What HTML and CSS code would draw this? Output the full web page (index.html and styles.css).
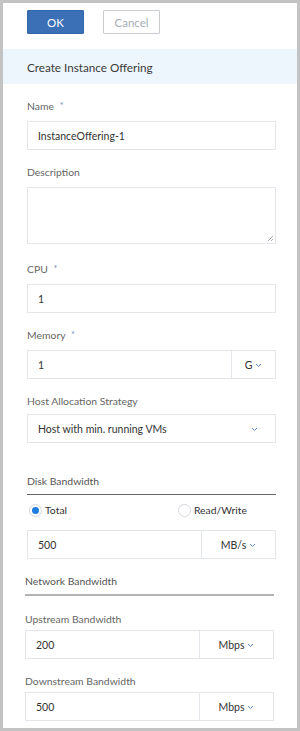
FILE: index.html
```html
<!DOCTYPE html>
<html>
<head>
<meta charset="utf-8">
<link rel="stylesheet" href="styles.css">
</head>
<body>
<div class="frame">
  <div class="actions">
    <button class="btn btn-primary">OK</button>
    <button class="btn btn-default">Cancel</button>
  </div>
  <div class="title">Create Instance Offering</div>
  <div class="form">
    <div class="field f-name">
      <div class="label">Name <span class="req">*</span></div>
      <div class="input"><span class="val">InstanceOffering-1</span></div>
    </div>
    <div class="field">
      <div class="label">Description</div>
      <div class="textarea">
        <svg class="grip" width="7" height="7" viewBox="0 0 7 7"><path d="M6 1L1 6M6 4L4 6" stroke="#999" stroke-width="0.8" fill="none"/></svg>
      </div>
    </div>
    <div class="field f-cpu">
      <div class="label">CPU <span class="req">*</span></div>
      <div class="input"><span class="val">1</span></div>
    </div>
    <div class="field">
      <div class="label">Memory <span class="req">*</span></div>
      <div class="input group">
        <span class="val grow">1</span>
        <span class="unit u-mem">G<svg class="chev" width="7" height="5" viewBox="0 0 7 5"><path d="M1 1l2.5 2.5L6 1" stroke="#5b86c8" stroke-width="1" fill="none"/></svg></span>
      </div>
    </div>
    <div class="field f-host">
      <div class="label">Host Allocation Strategy</div>
      <div class="input select">
        <span class="val grow">Host with min. running VMs</span>
        <svg class="chev sel-chev" width="7" height="5" viewBox="0 0 7 5"><path d="M1 1l2.5 2.5L6 1" stroke="#5b86c8" stroke-width="1" fill="none"/></svg>
      </div>
    </div>
    <div class="section disk">
      <div class="section-title">Disk Bandwidth</div>
      <div class="radios">
        <label class="radio"><span class="dot on"></span>Total</label>
        <label class="radio rw"><span class="dot"></span>Read/Write</label>
      </div>
      <div class="input group">
        <span class="val grow">500</span>
        <span class="unit u-wide">MB/s<svg class="chev" width="7" height="5" viewBox="0 0 7 5"><path d="M1 1l2.5 2.5L6 1" stroke="#5b86c8" stroke-width="1" fill="none"/></svg></span>
      </div>
    </div>
    <div class="section network">
      <div class="section-title net-title">Network Bandwidth</div>
      <div class="field f-up">
        <div class="label">Upstream Bandwidth</div>
        <div class="input group">
          <span class="val grow">200</span>
          <span class="unit u-wide">Mbps<svg class="chev" width="7" height="5" viewBox="0 0 7 5"><path d="M1 1l2.5 2.5L6 1" stroke="#5b86c8" stroke-width="1" fill="none"/></svg></span>
        </div>
      </div>
      <div class="field">
        <div class="label">Downstream Bandwidth</div>
        <div class="input group">
          <span class="val grow">500</span>
          <span class="unit u-wide">Mbps<svg class="chev" width="7" height="5" viewBox="0 0 7 5"><path d="M1 1l2.5 2.5L6 1" stroke="#5b86c8" stroke-width="1" fill="none"/></svg></span>
        </div>
      </div>
    </div>
  </div>
</div>
</body>
</html>
```
FILE: styles.css
```css
html, body {
  margin: 0;
  padding: 0;
}
body {
  width: 300px;
  height: 731px;
  overflow: hidden;
  font-family: "Lato", "Open Sans", sans-serif;
  color: #333;
}
.frame {
  box-sizing: border-box;
  width: 300px;
  height: 731px;
  border: 3px solid #c3c3c3;
  background: #fff;
  overflow: hidden;
}
.actions {
  display: flex;
  gap: 19px;
  padding: 7px 0 0 24px;
  height: 39px;
  box-sizing: border-box;
}
.btn {
  box-sizing: border-box;
  width: 57px;
  height: 24px;
  font-family: inherit;
  font-size: 11.5px;
  padding: 0;
  border-radius: 1px;
}
.btn-primary {
  background: #3b6fb6;
  border: 1px solid #3466ab;
  color: #fff;
}
.btn-default {
  background: #fff;
  border: 1px solid #c9ccd1;
  color: #a8adb4;
}
.title {
  height: 35px;
  margin-top: 7px;
  background: #eef6fd;
  display: flex;
  align-items: center;
  padding-left: 24px;
  font-size: 11.7px;
  color: #3a3a3a;
}
.form {
  padding: 0 21px 0 24px;
}
.field {
  display: flex;
  flex-direction: column;
  margin-top: 14px;
}
.f-name { margin-top: 14px; }
.f-cpu { margin-top: 17px; }
.f-host { margin-top: 14px; }
.f-host .label { margin-bottom: 5px; }
.label {
  font-size: 10.4px;
  line-height: 16px;
  color: #666;
  margin-bottom: 7px;
}
.req {
  color: #6f8fbf;
  font-size: 9px;
  margin-left: 3px;
  vertical-align: 1px;
}
.input {
  box-sizing: border-box;
  height: 29px;
  border: 1px solid #e3e6ea;
  display: flex;
  align-items: center;
  font-size: 10.5px;
  color: #333;
  background: #fff;
}
.val {
  padding-left: 10px;
}
.grow {
  flex: 1;
}
.group .unit {
  align-self: stretch;
  display: flex;
  align-items: center;
  justify-content: center;
  gap: 3px;
  border-left: 1px solid #e3e6ea;
  color: #333;
}
.u-mem { width: 43px; }
.u-wide { width: 73px; }
.chev { display: block; margin-top: 1px; }
.sel-chev { margin-right: 17px; }
.textarea {
  box-sizing: border-box;
  height: 57px;
  border: 1px solid #e3e6ea;
  position: relative;
}
.grip {
  position: absolute;
  right: 1px;
  bottom: 1px;
}
.section-title {
  font-size: 10.4px;
  line-height: 16px;
  color: #555;
  padding-bottom: 5px;
  border-bottom: 1px solid #666;
}
.disk {
  margin-top: 30px;
}
.radios {
  display: flex;
  height: 18px;
  margin-top: 6px;
  align-items: center;
  font-size: 10.4px;
  color: #333;
}
.radio {
  display: flex;
  align-items: center;
  gap: 3px;
}
.rw {
  margin-left: auto;
  margin-right: 29px;
}
.dot {
  box-sizing: border-box;
  width: 13px;
  height: 13px;
  border-radius: 50%;
  border: 1px solid #d4d7dc;
  background: #fff;
  display: flex;
  align-items: center;
  justify-content: center;
}
.radio:first-child .dot { margin-left: 2px; }
.dot.on::after {
  content: "";
  width: 7px;
  height: 7px;
  border-radius: 50%;
  background: #1e7ee0;
}
.disk .input {
  margin-top: 11px;
}
.network {
  margin-top: 14px;
  margin-left: -2px;
  margin-right: 2px;
}
.net-title {
  border-bottom: 2px solid #b3b3b3;
}
.f-up { margin-top: 15px; }
.network .label { margin-bottom: 3px; }
```
